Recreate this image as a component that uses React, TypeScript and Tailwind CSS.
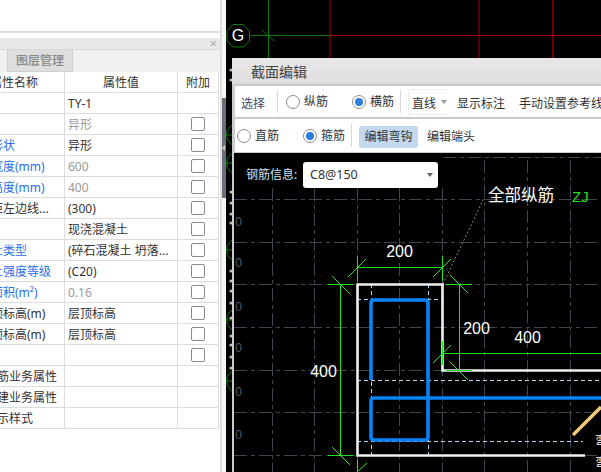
const font = "font-['Noto_Sans','Noto_Sans_CJK_SC',sans-serif]";

type Row = {
  label?: string;
  value?: string;
  blue?: boolean;
  muted?: boolean;
  box?: boolean;
  tree?: boolean;
};

const rows: Row[] = [
  { label: "名称", value: "TY-1" },
  { label: "类别", value: "异形", muted: true, box: true },
  { label: "截面形状", value: "异形", blue: true, box: true },
  { label: "截面宽度(mm)", value: "600", blue: true, muted: true, box: true },
  { label: "截面高度(mm)", value: "400", blue: true, muted: true, box: true },
  { label: "轴线距左边线...", value: "(300)", box: true },
  { label: "材质", value: "现浇混凝土", box: true },
  { label: "混凝土类型", value: "(碎石混凝土 坍落...", blue: true, box: true },
  { label: "混凝土强度等级", value: "(C20)", blue: true, box: true },
  { label: "截面面积(m²)", value: "0.16", blue: true, muted: true, box: true },
  { label: "起点顶标高(m)", value: "层顶标高", box: true },
  { label: "终点顶标高(m)", value: "层顶标高", box: true },
  { label: "备注", box: true },
  { label: "钢筋业务属性", tree: true },
  { label: "土建业务属性", tree: true },
  { label: "显示样式", tree: true },
];

function PropertyRow({ row }: { row: Row }) {
  return (
    <div className="flex h-[21px] border-b border-[#dcdcdc] text-[12px] leading-[22px]">
      <div
        className={`w-[101px] shrink-0 whitespace-nowrap border-r border-[#dcdcdc] ${row.tree ? "pl-[21px]" : "pl-[3px]"} ${row.blue ? "text-[#2a6fe8]" : "text-[#333]"}`}
      >
        {row.label}
      </div>
      <div
        className={`w-[113px] shrink-0 whitespace-nowrap border-r border-[#dcdcdc] pl-[3px] ${row.muted ? "text-[#999]" : "text-[#333]"}`}
      >
        {row.value}
      </div>
      <div className="flex w-[41px] shrink-0 items-center justify-center border-r border-[#dcdcdc]">
        {row.box && <span className="h-[14px] w-[14px] rounded-[2px] border border-[#8a8a8a] bg-white" />}
      </div>
    </div>
  );
}

function Radio({ checked }: { checked?: boolean }) {
  return (
    <span className="flex h-[14px] w-[14px] shrink-0 items-center justify-center rounded-full border border-[#8d8d8d] bg-white">
      {checked && <span className="h-[8px] w-[8px] rounded-full bg-[#2b7de0]" />}
    </span>
  );
}

function Caret({ className }: { className: string }) {
  return <span className={`h-0 w-0 border-x-[3px] border-t-[4px] border-x-transparent ${className}`} />;
}

function BackgroundCad() {
  const bubbles = [135, 163, 250, 320, 381];
  const dots = [70, 80, 192, 203, 214, 223, 271, 281, 291, 303, 318, 336, 345, 357, 368];
  return (
    <svg className="absolute inset-0 h-full w-full" viewBox="226 0 375 472">
      <path d="M268.5 0V58M250 35.5H330M262 30L274 41" stroke="#0a7a0a" fill="none" />
      <path d="M330 0V58M330 35.5H601M479 0V58" stroke="#a00000" fill="none" />
      <path d="M553 0V58" stroke="#e00000" fill="none" />
      <polygon
        points="233,24.5 243,24.5 249.5,31 249.5,41 243,47 233,47 227,41 227,31"
        fill="none"
        stroke="#0a7a0a"
      />
      <text x="238" y="41" textAnchor="middle" fontSize="16" fill="#fff" fontFamily="Liberation Sans, sans-serif">
        G
      </text>
      {bubbles.map((y) => (
        <g key={y} stroke="#0a7a0a" fill="none">
          <circle cx="238" cy={y} r="11.5" />
          <path d={`M226 ${y}H238`} />
        </g>
      ))}
      {dots.map((y) => (
        <circle key={y} cx="231" cy={y} r="1.6" fill="#bcbcbc" />
      ))}
    </svg>
  );
}

function SectionCad() {
  const gridX = [272.5, 314.5, 357.5, 399.5, 442.5, 484.5, 527.5, 570.5];
  const gridY = [199.5, 242.5, 284.5, 327.5, 370.5, 412.5, 455.5];
  const ghost = [222, 263, 307, 348, 392, 435];
  const label = { fontFamily: "Liberation Sans, sans-serif", fontSize: 16, fill: "#fff", textAnchor: "middle" as const };
  return (
    <svg className="absolute inset-0 h-full w-full" viewBox="234 153 367 319">
      {/* grid */}
      <g stroke="#3f4550" strokeDasharray="13 4 4 4" fill="none">
        {gridX.map((x) => (
          <path key={x} d={`M${x} ${x > 443 ? 160 : 188}V472`} />
        ))}
        {gridY.map((y) => (
          <path key={y} d={`M234 ${y}H601`} />
        ))}
        <path d="M443 157.5H601" />
      </g>
      {ghost.map((y) => (
        <text key={y} x="238.5" y={y + 4} textAnchor="middle" fontSize="12" fill="#565c66" fontFamily="Liberation Sans, sans-serif">
          0
        </text>
      ))}

      {/* leader */}
      <path d="M443 284L484 198" stroke="#8a8a8a" strokeDasharray="2 2" fill="none" />

      {/* dashed cover lines */}
      <path
        d="M371.5 284V455M428.5 284V455M357 299.5H442M357 380.5H601M357 441.5H583"
        stroke="#b9d4f2"
        strokeDasharray="4 3"
        fill="none"
      />

      {/* section outline */}
      <path d="M585 455.5H357.5V284.5H442.5V370.5H601" stroke="#f0f0f0" strokeWidth="2.6" fill="none" />

      {/* stirrups */}
      <path
        d="M371 380V303Q371 300 374 300H425Q428 300 428 303V437Q428 440 425 440H374Q371 440 371 437V401Q371 398 374 398H601"
        stroke="#0784f5"
        strokeWidth="3.6"
        fill="none"
      />

      {/* dimensions */}
      <path
        d="M357.5 267.5H442.5M357.5 256V281M442.5 256V281M348 277L366 259M433 277L451 259
           M340.5 284V455M328 284.5H353M328 455.5H353M332 276L350 294M332 447L350 465
           M459.5 284V370M446 284.5H472M446 370.5H472M450 275L468 293M450 362L468 380
           M442.5 353.5H601M442.5 341V365M433 363L451 345
           M357.5 459V472M357 472L367 463"
        stroke="#22e022"
        fill="none"
      />

      <path d="M573 435L601 407" stroke="#f5c97a" strokeWidth="3.4" fill="none" />

      <text {...label} x="399.5" y="257">200</text>
      <text {...label} x="476.5" y="334">200</text>
      <text {...label} x="527.5" y="343">400</text>
      <text {...label} x="323.5" y="377">400</text>
      <text x="488" y="201" fontSize="16.5" fill="#fff" fontFamily="Noto Sans CJK SC, sans-serif">全部纵筋</text>
      <text x="572" y="202" fontSize="15" fill="#22e022" fontFamily="Liberation Sans, sans-serif">ZJ</text>
      <text x="595" y="445" fontSize="13" fill="#fff" fontFamily="Noto Sans CJK SC, sans-serif">弯</text>
      <text x="595" y="467" fontSize="13" fill="#fff" fontFamily="Noto Sans CJK SC, sans-serif">弯</text>
    </svg>
  );
}

export default function App() {
  return (
    <div className={`flex h-[472px] w-[601px] overflow-hidden bg-white ${font}`}>
      {/* Property panel */}
      <aside className="flex h-full w-[222px] shrink-0 flex-col overflow-hidden border-r-2 border-[#dedede] bg-white">
        <div className="h-[33px] shrink-0 border-b-2 border-[#dedede]" />
        <div className="h-[5px] shrink-0" />
        <div className="flex h-[11px] shrink-0 items-center justify-end bg-[#e8e8e8] pr-[3px] text-[13px] leading-none text-[#aaa]">
          ×
        </div>
        <div className="flex h-[23px] shrink-0 border-t border-[#d8d8d8] bg-[#f0f0f0] pl-[7px]">
          <div className="flex w-[66px] items-center justify-center border-x border-b border-[#cfcfcf] bg-[#dedede] text-[12px] font-medium text-[#888]">
            图层管理
          </div>
        </div>
        <div className="-ml-[36px] w-[255px]">
          <div className="flex h-[21px] border-b border-[#dcdcdc] text-[12px] leading-[22px] text-[#333]">
            <div className="w-[101px] shrink-0 border-r border-[#dcdcdc] text-center">属性名称</div>
            <div className="w-[113px] shrink-0 border-r border-[#dcdcdc] text-center">属性值</div>
            <div className="w-[41px] shrink-0 border-r border-[#dcdcdc] text-center">附加</div>
          </div>
          {rows.map((row) => (
            <PropertyRow key={row.label} row={row} />
          ))}
        </div>
      </aside>

      {/* Splitter */}
      <div className="flex h-full w-[4px] shrink-0 flex-col bg-[#f7f7f7]">
        <div className="h-[98px] shrink-0" />
        <div className="flex h-[100px] shrink-0 items-center bg-[#6a7078]">
          <span className="h-0 w-0 border-y-[3px] border-r-[3px] border-y-transparent border-r-[#c8cbce]" />
        </div>
      </div>

      {/* Drawing area */}
      <main className="relative h-full flex-1 bg-black">
        <BackgroundCad />

        <section className="absolute inset-y-0 left-[6px] right-0 top-[58px] flex flex-col bg-[#cccccc]">
          <div className="flex h-[26px] shrink-0 items-center bg-gradient-to-b from-[#e9e7e7] to-[#dedcdc] pl-[19px] text-[14px] text-[#444]">
            截面编辑
          </div>

          <div className="ml-[3px] flex h-[35px] shrink-0 items-center overflow-hidden whitespace-nowrap border-y-2 border-[#c9c9cd] bg-white pl-[6px] text-[12px] text-[#333]">
            <span className="mt-[4px] text-[#3b4a66]">选择</span>
            <span className="ml-[12px] h-[23px] w-px shrink-0 bg-[#d8d8d8]" />
            <span className="ml-[8px]"><Radio /></span>
            <span className="ml-[4px] mt-px">纵筋</span>
            <span className="ml-[24px]"><Radio checked /></span>
            <span className="ml-[4px] mt-px">横筋</span>
            <span className="ml-[6px] h-[23px] w-px shrink-0 bg-[#d8d8d8]" />
            <span className="ml-[7px] flex h-[26px] w-[41px] shrink-0 items-center gap-[5px] rounded-[3px] border-y border-l border-[#eeeeee] pl-[3px]">
              <span className="mt-[4px]">直线</span>
              <Caret className="border-t-[#999]" />
            </span>
            <span className="ml-[8px] mt-[4px]">显示标注</span>
            <span className="ml-[14px] mt-[4px]">手动设置参考线</span>
          </div>

          <div className="ml-[3px] flex h-[33px] shrink-0 items-center overflow-hidden whitespace-nowrap bg-white pl-[2px] text-[12px] text-[#333]">
            <Radio />
            <span className="ml-[4px] mt-px">直筋</span>
            <span className="ml-[24px]"><Radio checked /></span>
            <span className="ml-[4px] mt-px">箍筋</span>
            <span className="ml-[6px] h-[23px] w-px shrink-0 bg-[#d8d8d8]" />
            <span className="ml-[7px] mt-[2px] flex h-[22px] w-[59px] shrink-0 items-center justify-center rounded-[3px] bg-[#c2d9f0]">
              编辑弯钩
            </span>
            <span className="ml-[9px] mt-[2px]">编辑端头</span>
          </div>

          <div className="relative ml-[2px] mt-px flex-1 bg-black">
            <SectionCad />
            <div className="absolute left-[12px] top-[9px] flex items-center">
              <span className="w-[57px] text-[12px] text-[#cfe0f2]">钢筋信息:</span>
              <div className="flex h-[26px] w-[135px] items-center justify-between rounded-[3px] bg-white pl-[7px] pr-[5px] text-[12.5px] text-[#333]">
                C8@150
                <Caret className="border-t-[#666]" />
              </div>
            </div>
          </div>
        </section>
      </main>
    </div>
  );
}
